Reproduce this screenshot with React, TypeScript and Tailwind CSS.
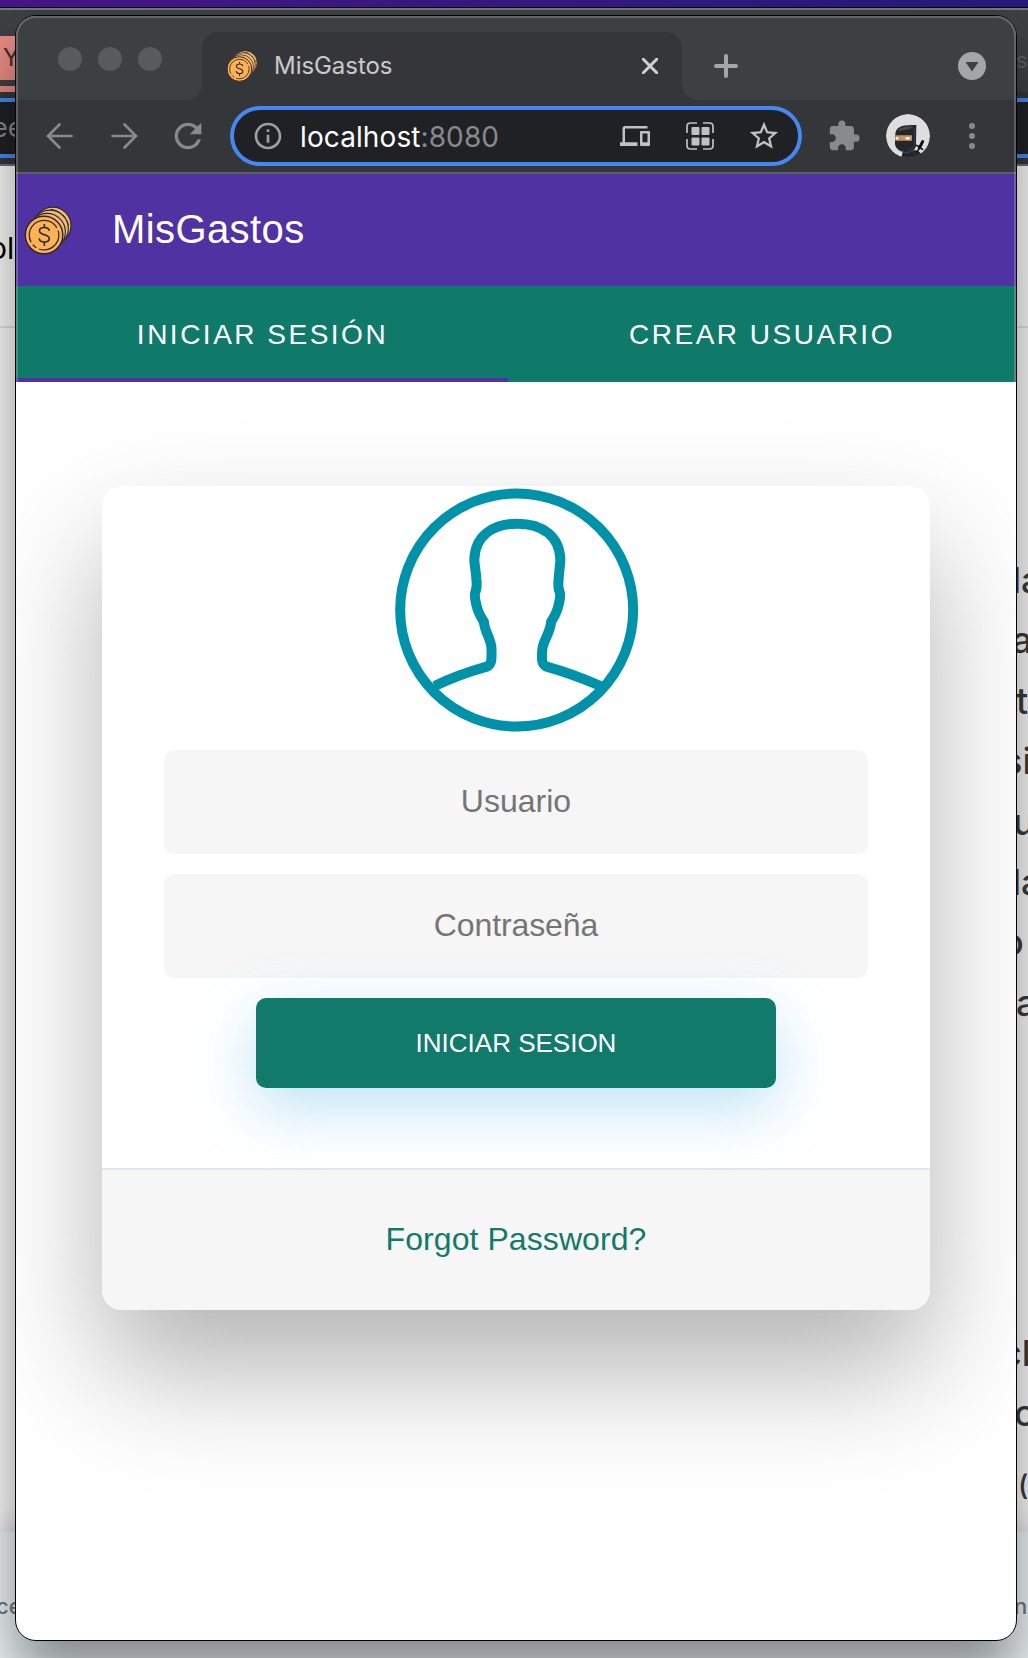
import React from "react";
import { MdDevices, MdExtension, MdInfoOutline, MdRefresh, MdStarBorder } from "react-icons/md";

function Coins({ className }: { className: string }) {
  const back = [
    [158, 674],
    [150, 683],
    [141, 693],
  ];
  return (
    <svg className={className} viewBox="71 615 146 148" fill="none">
      {back.map(([x, y]) => (
        <circle key={x} cx={x} cy={y} r="56" fill="#f0b974" stroke="#2d2a2b" strokeWidth="3.500" />
      ))}
      <path d="M152 625Q170 626 182 636M188 641L196 651M202 660L206 672" stroke="#2d2a2b" strokeWidth="3" />
      <circle cx="132" cy="703" r="57" fill="#ffb255" stroke="#2d2a2b" strokeWidth="4.500" />
      <circle cx="132" cy="703" r="45" stroke="#2d2a2b" strokeWidth="4" strokeDasharray="86 9 14 9 140 9 16 0" />
      <path
        d="M133 669v11M133 724v12M148 690c-1-7-7-10-15-10-9 0-15 4-15 10 0 16 30 8 30 24 0 6-6 10-15 10s-15-4-16-11"
        stroke="#2d2a2b"
        strokeWidth="5"
      />
    </svg>
  );
}

function Ninja() {
  return (
    <svg className="size-11" viewBox="618 342 132 132" fill="none">
      <defs>
        <clipPath id="avatar">
          <circle cx="684" cy="408" r="66" />
        </clipPath>
      </defs>
      <g clipPath="url(#avatar)">
        <circle cx="684" cy="408" r="66" fill="#dedede" />
        <path d="M664 474L668 456L704 450Q722 452 730 474Z" fill="#242628" />
        <path d="M646 404C646 382 662 373 709 375L708 438C704 452 690 458 678 458C660 454 645 447 645 430Z" fill="#242628" />
        <path d="M652 396Q658 378 700 379Q692 390 660 392Z" fill="#4a4b4d" />
        <path d="M703 382V436Q694 450 680 454" stroke="#26446f" strokeWidth="2.500" />
        <path d="M646 406H696V422H646Z" fill="#c98f62" />
        <ellipse cx="651" cy="415" rx="4" ry="4" fill="#fff" />
        <ellipse cx="683" cy="415" rx="7" ry="4" fill="#fff" />
        <path d="M718 444L728 425" stroke="#141414" strokeWidth="9" strokeLinecap="round" />
        <path d="M710 436L728 448M712 454L717 446" stroke="#141414" strokeWidth="5" strokeLinecap="round" />
        <path d="M652 447Q666 458 680 459L704 450" stroke="#315f9c" strokeWidth="2" />
      </g>
    </svg>
  );
}

function UserOutline() {
  return (
    <svg className="mt-0.5 ml-[293px] block h-[244px] w-[244px] shrink-0" viewBox="75 54 732 732" fill="none" stroke="#0092a8" strokeWidth="30">
      <circle cx="440" cy="420" r="349.5" />
      <path
        d="M194 648C244 624 300 604 350 590Q362 586 364 570C366 530 364 522 356 502C348 484 342 468 342 456C336 446 324 430 319 404C315 388 313 374 316 366C321 356 321 345 319 325C318 305 313 285 313 268C315 200 365 161 442 161C519 161 569 200 571 268C571 285 567 305 566 325C564 345 564 356 569 366C572 374 570 388 566 404C561 430 549 446 543 456C543 468 537 484 529 502C519 524 515 530 516 570Q518 586 530 590C580 604 640 626 692 648"
        strokeLinejoin="round"
      />
    </svg>
  );
}

function QrFrame() {
  return (
    <svg className="size-7" viewBox="0 0 28 28" fill="none">
      <path d="M1 11V4.500Q1 1 4.500 1H11M17 1h6.500Q27 1 27 4.500V11M27 17v6.500Q27 27 23.500 27H17M11 27H4.500Q1 27 1 23.500V17" stroke="#c0c1c3" strokeWidth="1.700" />
      <rect x="5.500" y="5" width="8" height="8" rx="1" fill="#c0c1c3" />
      <rect x="15.500" y="5" width="8" height="8" rx="1" fill="#c0c1c3" />
      <rect x="5.500" y="15.500" width="8" height="8" rx="1" fill="#c0c1c3" />
      <rect x="15.500" y="15.500" width="8" height="8" rx="1" fill="#c0c1c3" />
    </svg>
  );
}

function Slot({ children }: { children: React.ReactNode }) {
  return <div className="flex w-16 shrink-0 items-center justify-center">{children}</div>;
}

function TabStrip() {
  return (
    <div className="h-[84px] shrink-0 bg-[#35363a]">
      <div className="h-4 bg-[#3c4043]" />
      <div className="flex h-[68px]">
        <div className="flex w-[186px] gap-4 rounded-br-[16px] bg-[#3c4043] pt-[15px] pl-[42px]">
          <span className="size-6 rounded-full bg-[#585b5e]" />
          <span className="size-6 rounded-full bg-[#585b5e]" />
          <span className="size-6 rounded-full bg-[#585b5e]" />
        </div>
        <div className="w-[480px] bg-[#3c4043]">
          <div className="flex h-full items-center rounded-t-[16px] bg-[#35363a] pr-6 pl-6">
            <Coins className="size-8" />
            <span className="ml-4 flex-1 font-['Inter'] text-[24px] tracking-[-0.050px] text-[#c9cacc]">MisGastos</span>
            <svg className="size-4" viewBox="0 0 16 16" stroke="#d0d1d3" strokeWidth="3">
              <path d="M1 1L15 15M15 1L1 15" strokeLinecap="round" />
            </svg>
          </div>
        </div>
        <div className="flex flex-1 items-center justify-between rounded-bl-[16px] bg-[#3c4043] pr-[30px] pl-8">
          <svg className="size-6" viewBox="0 0 24 24" stroke="#a3a7aa" strokeWidth="4" strokeLinecap="round">
            <path d="M12 2V22M2 12H22" />
          </svg>
          <svg className="size-7" viewBox="0 0 28 28">
            <circle cx="14" cy="14" r="14" fill="#a3a7aa" />
            <path d="M7.500 10H20.500L14 19.500Z" fill="#3c4043" />
          </svg>
        </div>
      </div>
    </div>
  );
}

function Toolbar() {
  return (
    <div className="flex h-[74px] shrink-0 items-center border-b-2 border-[#5c5e61] bg-[#35363a] pl-3 text-[#88898c]">
      <Slot>
        <svg className="mr-0.5 h-[26px] w-[27px]" viewBox="0 0 27 26" fill="none" stroke="currentColor" strokeWidth="2.700" strokeLinecap="round">
          <path d="M25.500 13H2M13.500 1.500L2 13L13.500 24.500" />
        </svg>
      </Slot>
      <Slot>
        <svg className="h-[26px] w-[27px]" viewBox="0 0 27 26" fill="none" stroke="currentColor" strokeWidth="2.700" strokeLinecap="round">
          <path d="M1.500 13H25M13.500 1.500L25 13L13.500 24.500" />
        </svg>
      </Slot>
      <Slot>
        <MdRefresh className="size-10" />
      </Slot>
      <div className="ml-2.5 flex h-[60px] w-[572px] items-center rounded-full border-4 border-[#4688f1] bg-[#202124] pr-0.5 pl-[18px]">
        <MdInfoOutline className="size-8 text-[#9aa0a6]" />
        <div className="ml-4 flex-1 pt-px font-['Inter'] text-[28px] tracking-[0.100px] text-white">
          localhost<span className="text-[#88898b]">:8080</span>
        </div>
        <Slot>
          <MdDevices className="mr-0.5 size-[30px] text-[#c0c1c3]" />
        </Slot>
        <Slot>
          <QrFrame />
        </Slot>
        <Slot>
          <MdStarBorder className="size-[34px] text-[#c0c1c3]" />
        </Slot>
      </div>
      <div className="ml-2.5 flex">
        <Slot>
          <MdExtension className="size-[34px]" />
        </Slot>
        <Slot>
          <Ninja />
        </Slot>
        <Slot>
          <span className="flex flex-col gap-1">
            <i className="size-1.5 rounded-full bg-current" />
            <i className="size-1.5 rounded-full bg-current" />
            <i className="size-1.5 rounded-full bg-current" />
          </span>
        </Slot>
      </div>
    </div>
  );
}

function LoginCard() {
  return (
    <div className="mx-[86px] mt-[104px] flex h-[824px] w-[828px] shrink-0 flex-col rounded-[20px] bg-white font-['Liberation_Sans'] shadow-[0_60px_120px_rgba(0,0,0,0.3)]">
      <UserOutline />
      <input
        placeholder="Usuario"
        className="mx-auto mt-[18px] h-[104px] w-[704px] rounded-[10px] bg-[#f6f6f6] pb-0.5 text-center text-[32px] placeholder:text-[#757575]"
      />
      <input
        placeholder="Contraseña"
        className="mx-auto mt-5 h-[104px] w-[704px] rounded-[10px] bg-[#f6f6f6] pb-0.5 text-center text-[32px] tracking-[-0.100px] placeholder:text-[#757575]"
      />
      <button className="relative z-10 mx-auto mt-5 h-[90px] w-[520px] rounded-[10px] bg-[#117a6b] text-[26px] text-white shadow-[0_20px_60px_rgba(95,186,233,0.4)]">
        INICIAR SESION
      </button>
      <div className="mt-20 flex flex-1 items-center justify-center rounded-b-[20px] border-t-2 border-[#dce8f1] bg-[#f6f6f6] pb-0.5">
        <a className="text-[32px] tracking-[0.080px] text-[#117a6b]">Forgot Password?</a>
      </div>
    </div>
  );
}

const article = [
  { text: "la", pull: "-ml-1" },
  { text: "a", pull: "-ml-1" },
  { text: "t", pull: "ml-0" },
  { text: "si", pull: "-ml-[13px]" },
  { text: "u", pull: "-ml-[3px]" },
  { text: "la", pull: "-ml-1" },
  { text: "o", pull: "-ml-[14px]" },
  { text: "a", pull: "ml-0" },
];

function Backdrop() {
  return (
    <div className="flex h-[1658px] flex-col">
      <div className="h-2 shrink-0 border-b border-black bg-linear-to-r from-[#47158a] to-[#241a7c]" />
      <div className="flex h-[84px] shrink-0 items-end justify-between border-t-2 border-[#75787a] bg-[#3c4043]">
        <div className="h-14 w-5 border-b-[6px] border-[#e88a84]">
          <div className="flex h-11 items-center bg-[#e88a84] pl-[3px] font-['Inter'] text-[24px] text-[#333]">Y</div>
        </div>
        <span className="mb-[15px] w-3 font-['Inter'] text-[22px] text-[#5a5c5f]">s</span>
      </div>
      <div className="h-[74px] shrink-0 border-b-2 border-[#6a6c6e] bg-[#35363a] pt-1.5">
        <div className="flex h-[60px] items-center border-y-4 border-[#4688f1] bg-[#202124] font-['Inter'] text-[27px] text-[#88898b]">
          <span className="-ml-2">ee</span>
        </div>
      </div>
      <div className="flex flex-1 flex-col bg-[#fafafa]">
        <div className="flex h-[162px] shrink-0 items-center border-b-2 border-[#e2e2e2] font-['Inter'] text-[30px] text-black">
          <span className="-ml-[11px] pt-1 whitespace-nowrap">ol</span>
        </div>
        <div className="mt-[222px] ml-[1016px] w-3 font-['Inter'] text-[36px] leading-[60.400px] font-medium text-[#3c3c3c]">
          {article.map((line, i) => (
            <div key={i} className={"h-[60.400px] whitespace-nowrap " + line.pull}>
              {line.text}
            </div>
          ))}
        </div>
        <div className="mt-[290px] ml-[1016px] w-3 font-['Inter'] text-[36px] leading-[60px] font-medium whitespace-nowrap text-[#3c3c3c]">
          <div className="-ml-[15px]">cl</div>
          <div className="-ml-0.5">o</div>
          <div className="mt-3 ml-[2px] text-[28px]">(</div>
        </div>
      </div>
      <div className="flex h-[126px] shrink-0 items-start justify-between bg-[#ecf3f5] pt-[58px] font-['Inter'] text-[22px] font-medium text-[#74787c] shadow-[0_-4px_28px_rgba(0,0,0,0.2)]">
        <span className="-ml-1">ce</span>
        <span className="w-3.5">n</span>
      </div>
    </div>
  );
}

export default function App() {
  return (
    <div className="relative h-[1658px] w-[1028px] overflow-hidden">
      <Backdrop />
      <div className="absolute top-[15px] left-[15px] h-[1626px] w-[1002px] rounded-[21px] border border-black bg-white shadow-[0_34px_54px_rgba(0,0,0,0.43)]">
        <div className="flex h-full flex-col overflow-hidden rounded-[20px]">
          <TabStrip />
          <Toolbar />
          <header className="flex h-[112px] shrink-0 items-center bg-[#5032a3] pl-2 font-['Liberation_Sans'] text-white">
            <Coins className="h-[49px] w-12" />
            <h1 className="ml-10 pb-[3px] text-[40px] tracking-[0.400px]">MisGastos</h1>
          </header>
          <nav className="flex h-24 shrink-0 bg-[#107a6a] font-['Liberation_Sans'] text-[28px] tracking-[2.500px] text-white">
            <div className="flex w-[492px] items-center justify-center border-b-4 border-[#5032a3] pt-[5px] pl-px">INICIAR SESIÓN</div>
            <div className="flex flex-1 items-center justify-center pt-px">CREAR USUARIO</div>
          </nav>
          <div className="flex flex-1 flex-col overflow-hidden">
            <LoginCard />
          </div>
        </div>
        <div className="pointer-events-none absolute inset-0 rounded-[20px] border-2 border-white/20" />
      </div>
    </div>
  );
}
